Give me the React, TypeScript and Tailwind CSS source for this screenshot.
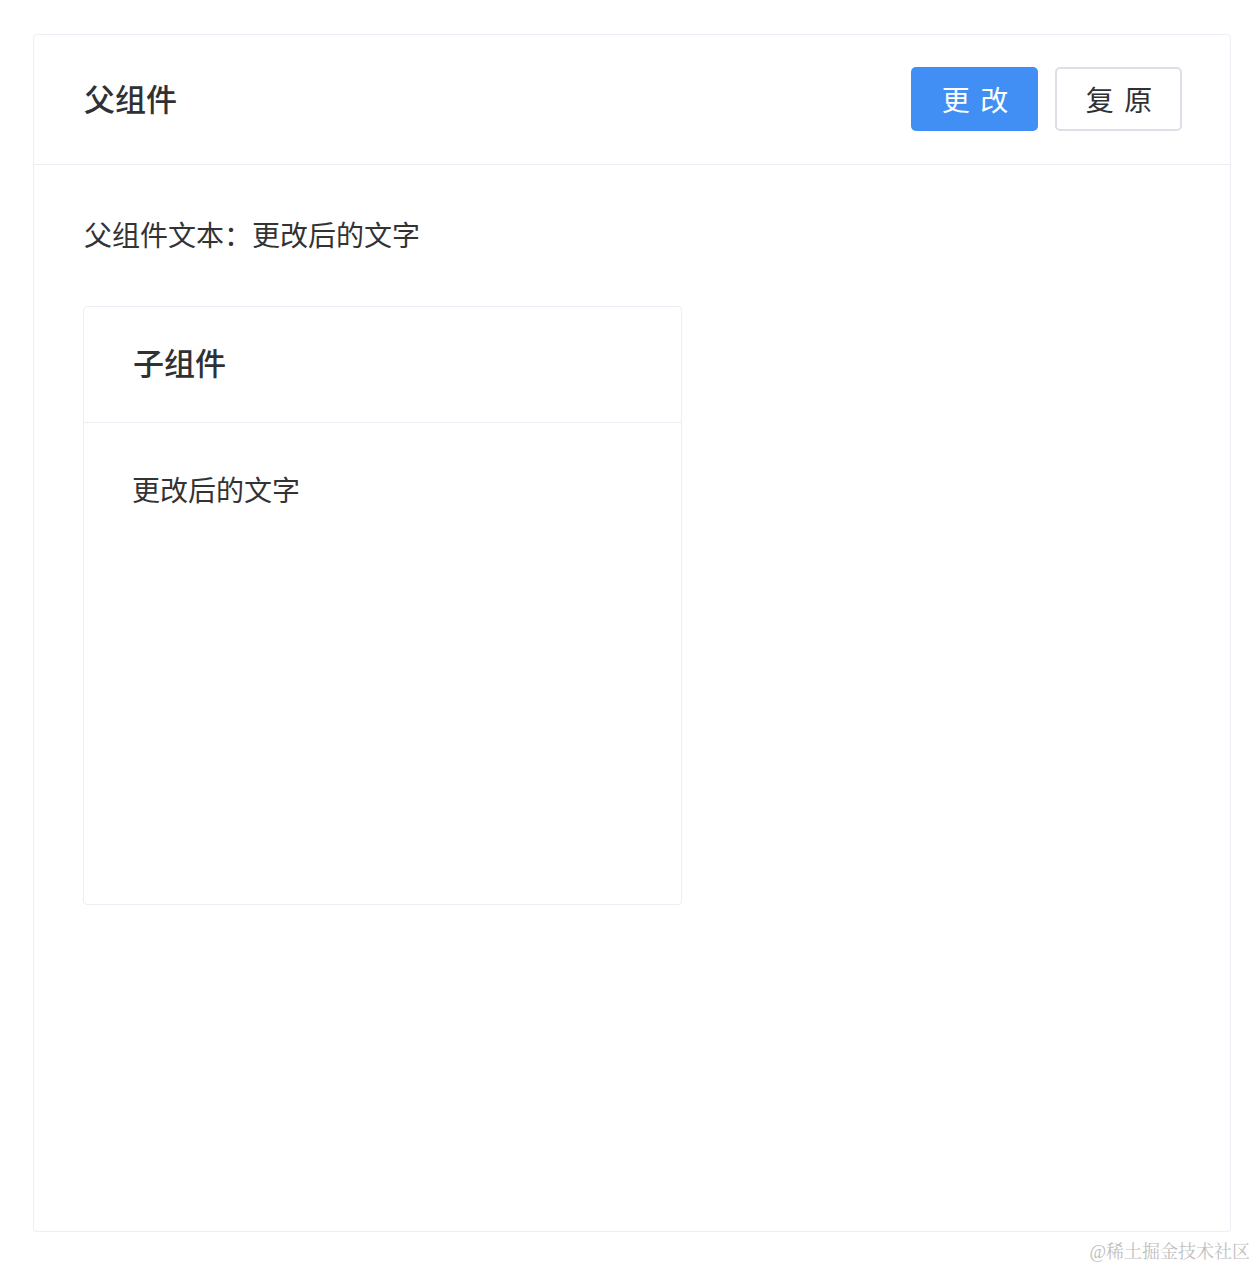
export default function App() {
  return (
    <div className="relative min-h-[1268px] w-[1256px] bg-white pl-[33px] pt-[34px] font-['Noto_Sans_CJK_SC',sans-serif] text-[#303133]">
      {/* 父组件 */}
      <div className="flex h-[1198px] w-[1198px] flex-col rounded-[4px] border border-[#ebeef5] bg-white">
        <div className="flex h-[130px] items-center justify-between border-b border-[#ebeef5] pl-[50px] pr-[48px]">
          <div className="-mt-[4px] text-[31px] font-medium leading-[40px]">父组件</div>
          <div className="-mt-[1px] flex gap-[17px]">
            <button className="h-[64px] w-[127px] rounded-[5px] bg-[#418ff4] pl-[3px] text-[28px] tracking-[2px] text-white">
              更 改
            </button>
            <button className="h-[64px] w-[127px] rounded-[5px] border-2 border-[#dcdfe6] bg-white pl-[3px] text-[28px] tracking-[2px] text-[#303133]">
              复 原
            </button>
          </div>
        </div>
        <div className="pb-[50px] pl-[49px] pr-[50px] pt-[48px]">
          <div className="pl-[1px] text-[28px] leading-[42px] text-[#333]">父组件文本：更改后的文字</div>
          {/* 子组件 */}
          <div className="mt-[51px] flex h-[599px] w-[599px] flex-col rounded-[4px] border border-[#ebeef5]">
            <div className="flex h-[116px] items-center border-b border-[#ebeef5] px-[49px]">
              <div className="-mt-[6px] text-[31px] font-medium leading-[40px]">子组件</div>
            </div>
            <div className="px-[48px] pb-[50px] pt-[48px]">
              <div className="text-[28px] leading-[36px] text-[#333]">更改后的文字</div>
            </div>
          </div>
        </div>
      </div>
      <div className="absolute bottom-[2px] right-[6px] font-['Liberation_Serif','Noto_Serif_CJK_SC',serif] text-[18px] text-[#bfbfbf]">
        @稀土掘金技术社区
      </div>
    </div>
  )
}
